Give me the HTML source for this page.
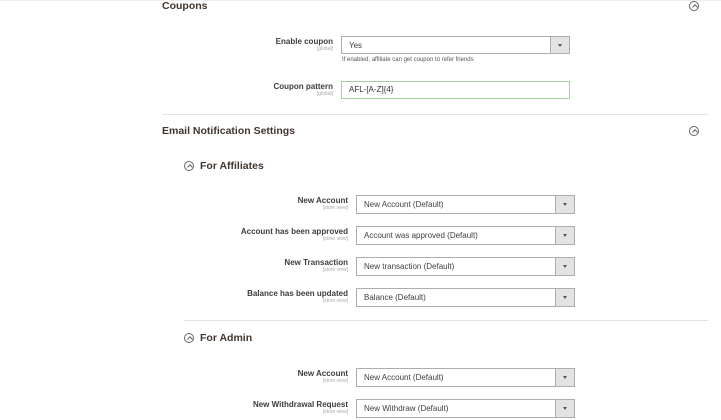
<!DOCTYPE html>
<html><head><style>
body{margin:0;width:721px;height:420px;background:#fff;font-family:"Liberation Sans",sans-serif;color:#303030;position:relative;overflow:hidden}
.a{position:absolute}
.t{font-weight:bold;font-size:10.5px;color:#41362f}
.ic{width:10px;height:10px;border:1px solid #666;border-radius:50%;box-sizing:border-box}
.ic:after{content:"";position:absolute;left:2.5px;top:3.2px;width:3px;height:3px;border-left:1px solid #666;border-top:1px solid #666;transform:rotate(45deg)}
.lb{text-align:right;font-size:8px;font-weight:bold;color:#3d3d3d;line-height:9px}
.lb small{display:block;font-weight:normal;font-size:5px;color:#aaa;line-height:6px}
.sel{border:1px solid #adadad;box-sizing:border-box;font-size:8px;line-height:17px;padding-left:7px;color:#404040;background:#fff}
.sel:after{content:"";position:absolute;right:0;top:0;width:18px;height:100%;background:#e3e3e3;border-left:1px solid #adadad}
.sel b{position:absolute;right:7px;top:7px;border-left:2px solid transparent;border-right:2px solid transparent;border-top:3px solid #555;z-index:1}
.hr{height:1px;background:#e3e3e3}
</style></head><body>
<div class="a" style="left:0;top:0;width:721px;height:1px;background:#eee"></div>
<div class="a t" style="left:162px;top:0px">Coupons</div>
<div class="a ic" style="left:689px;top:1px"></div>

<div class="a lb" style="left:180px;width:153px;top:37px">Enable coupon<small>[global]</small></div>
<div class="a sel" style="left:341px;top:36px;width:229px;height:18px">Yes<b></b></div>
<div class="a" style="left:342px;top:57px;font-size:6px;color:#555">If enabled, affiliate can get coupon to refer friends</div>
<div class="a lb" style="left:180px;width:153px;top:82px">Coupon pattern<small>[global]</small></div>
<div class="a" style="left:341px;top:81px;width:229px;height:18px;border:1px solid #a8cfa0;box-sizing:border-box;font-size:8px;line-height:16px;padding-left:7px">AFL-[A-Z]{4}</div>
<div class="a hr" style="left:162px;top:114px;width:546px"></div>

<div class="a t" style="left:162px;top:125px">Email Notification Settings</div>
<div class="a ic" style="left:689px;top:126px"></div>
<div class="a ic" style="left:184px;top:161px"></div>
<div class="a t" style="left:200px;top:160px">For Affiliates</div>

<div class="a lb" style="left:180px;width:168px;top:196px">New Account<small>[store view]</small></div>
<div class="a sel" style="left:356px;top:195px;width:219px;height:19px">New Account (Default)<b></b></div>
<div class="a lb" style="left:180px;width:168px;top:227px">Account has been approved<small>[store view]</small></div>
<div class="a sel" style="left:356px;top:226px;width:219px;height:19px">Account was approved (Default)<b></b></div>
<div class="a lb" style="left:180px;width:168px;top:258px">New Transaction<small>[store view]</small></div>
<div class="a sel" style="left:356px;top:257px;width:219px;height:19px">New transaction (Default)<b></b></div>
<div class="a lb" style="left:180px;width:168px;top:289px">Balance has been updated<small>[store view]</small></div>
<div class="a sel" style="left:356px;top:288px;width:219px;height:19px">Balance (Default)<b></b></div>
<div class="a hr" style="left:184px;top:320px;width:524px"></div>

<div class="a ic" style="left:184px;top:333px"></div>
<div class="a t" style="left:200px;top:332px">For Admin</div>
<div class="a lb" style="left:180px;width:168px;top:369px">New Account<small>[store view]</small></div>
<div class="a sel" style="left:356px;top:368px;width:219px;height:19px">New Account (Default)<b></b></div>
<div class="a lb" style="left:180px;width:168px;top:400px">New Withdrawal Request<small>[store view]</small></div>
<div class="a sel" style="left:356px;top:399px;width:219px;height:19px">New Withdraw (Default)<b></b></div>
</body></html>
